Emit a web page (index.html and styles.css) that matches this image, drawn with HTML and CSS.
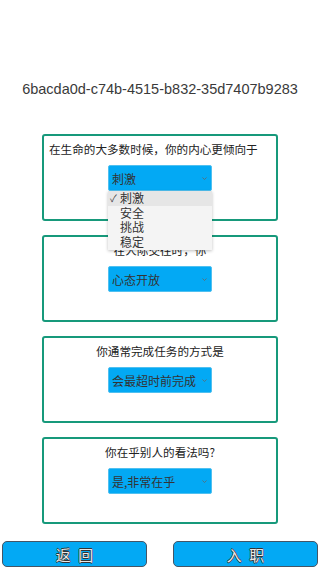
FILE: index.html
```html
<!DOCTYPE html>
<html lang="zh">
  <head>
    <meta charset="UTF-8" />
    <meta name="viewport" content="width=device-width, initial-scale=1.0" />
    <title>问卷</title>
    <link rel="stylesheet" href="styles.css">
  </head>
  <body>
    <div class="page">
      <div class="uid">6bacda0d-c74b-4515-b832-35d7407b9283</div>

      <div class="cards">
        <div class="card card-open">
          <p class="question left">在生命的大多数时候，你的内心更倾向于</p>
          <div class="select">
            <span>刺激</span>
            <svg class="arrow" width="5" height="3" viewBox="0 0 5 3"><path d="M0.5 0.5 L2.5 2.5 L4.5 0.5" fill="none" stroke="#666" stroke-width="0.8"/></svg>
            <div class="options">
              <div class="option checked"><span class="check">✓</span>刺激</div>
              <div class="option">安全</div>
              <div class="option">挑战</div>
              <div class="option">稳定</div>
            </div>
          </div>
        </div>

        <div class="card">
          <p class="question">在人际交往时，你</p>
          <div class="select">
            <span>心态开放</span>
            <svg class="arrow" width="5" height="3" viewBox="0 0 5 3"><path d="M0.5 0.5 L2.5 2.5 L4.5 0.5" fill="none" stroke="#666" stroke-width="0.8"/></svg>
          </div>
        </div>

        <div class="card">
          <p class="question">你通常完成任务的方式是</p>
          <div class="select">
            <span>会最超时前完成</span>
            <svg class="arrow" width="5" height="3" viewBox="0 0 5 3"><path d="M0.5 0.5 L2.5 2.5 L4.5 0.5" fill="none" stroke="#666" stroke-width="0.8"/></svg>
          </div>
        </div>

        <div class="card">
          <p class="question">你在乎别人的看法吗?</p>
          <div class="select">
            <span>是,非常在乎</span>
            <svg class="arrow" width="5" height="3" viewBox="0 0 5 3"><path d="M0.5 0.5 L2.5 2.5 L4.5 0.5" fill="none" stroke="#666" stroke-width="0.8"/></svg>
          </div>
        </div>
      </div>

      <div class="actions">
        <button class="btn">返 回</button>
        <button class="btn">入 职</button>
      </div>
    </div>
  </body>
</html>
```

FILE: styles.css
```css
body {
  margin: 0;
  background-color: #fff;
  font-family: "Liberation Sans", "Noto Sans CJK SC", sans-serif;
  color: #333;
}
.page {
  width: 320px;
  height: 569px;
  display: flex;
  flex-direction: column;
}
.uid {
  padding-top: 80px;
  height: 18px;
  line-height: 18px;
  font-size: 14.5px;
  text-align: center;
  color: #3a3a3a;
}
.cards {
  margin-top: 36px;
  display: flex;
  flex-direction: column;
  gap: 14px;
}
.card {
  width: 232px;
  height: 83px;
  margin: 0 auto;
  border: 2px solid #17997b;
  border-radius: 3px;
  display: flex;
  flex-direction: column;
  align-items: center;
}
.card-open {
  position: relative;
  z-index: 2;
}
.question {
  margin: 5px 0 0;
  width: 100%;
  height: 16px;
  line-height: 16px;
  font-size: 11.6px;
  font-family: "Noto Sans CJK SC", sans-serif;
  text-align: center;
  color: #222;
  white-space: nowrap;
}
.question.left {
  text-align: left;
  padding-left: 5px;
  box-sizing: border-box;
}
.select {
  position: relative;
  margin-top: 8px;
  width: 104px;
  height: 26px;
  box-sizing: border-box;
  background-color: #03a9f4;
  border: 1px solid #4fc0f0;
  border-radius: 2px;
  display: flex;
  align-items: center;
  justify-content: space-between;
  padding: 0 4px 0 3px;
  font-family: "Noto Sans CJK SC", sans-serif;
  font-size: 12px;
  color: #333;
  white-space: nowrap;
}
.arrow {
  display: block;
}
.options {
  position: absolute;
  top: 25px;
  left: -1px;
  width: 104px;
  padding-bottom: 1px;
  background-color: #f4f4f4;
  box-shadow: 0 1px 3px rgba(0, 0, 0, 0.25);
}
.option {
  height: 14.5px;
  line-height: 14.5px;
  padding-left: 12px;
  font-size: 12px;
  color: #333;
  position: relative;
}
.option.checked {
  background-color: #e6e6e6;
}
.check {
  position: absolute;
  left: 2px;
  font-size: 10px;
  color: #444;
}
.actions {
  margin-top: auto;
  padding: 0 2px 2px;
  display: flex;
  justify-content: space-between;
}
.btn {
  width: 145px;
  height: 26px;
  background-color: #03a9f4;
  border: 1px solid #456;
  border-radius: 5px;
  font-family: "Noto Sans CJK SC", sans-serif;
  font-size: 15px;
  letter-spacing: 2px;
  color: #e8e8e8;
  text-shadow: 0.6px 0 #333, -0.6px 0 #333, 0 0.6px #333, 0 -0.6px #333;
  padding: 0 0 0 2px;
}
```
